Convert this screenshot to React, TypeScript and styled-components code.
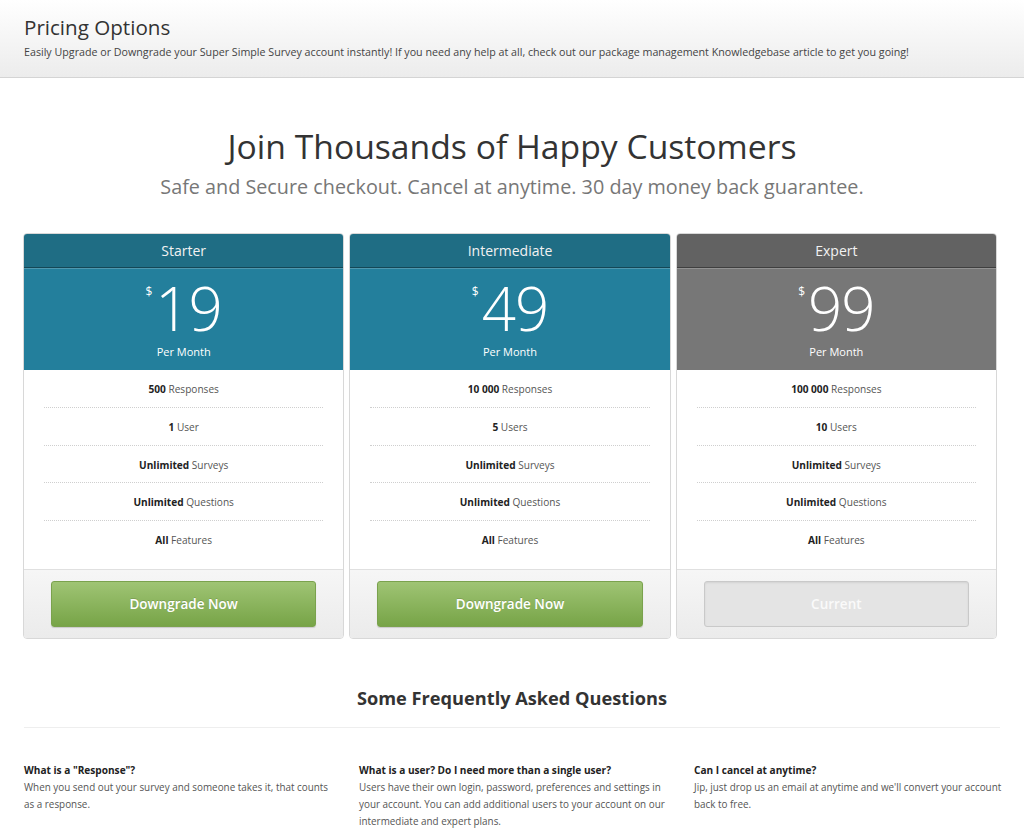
import styled, { createGlobalStyle, css } from "styled-components";

const GlobalStyle = createGlobalStyle`
  html, body {
    margin: 0;
    padding: 0;
    background: #fff;
    font-family: "Open Sans", "Liberation Sans", sans-serif;
    color: #333;
  }
  * { box-sizing: border-box; }
`;

const PageHeader = styled.header`
  height: 78px;
  padding: 13px 24px 0;
  background: linear-gradient(to bottom, #ffffff 0%, #ececec 100%);
  border-bottom: 1px solid #d4d4d4;
`;

const PageTitle = styled.h1`
  margin: 0;
  font-size: 20.6px;
  font-weight: 400;
  line-height: 28px;
  color: #333;
`;

const PageLead = styled.p`
  margin: 3px 0 0;
  font-size: 10.7px;
  line-height: 16px;
  color: #444;
`;

const Main = styled.main`
  padding: 0 25px;
`;

const Hero = styled.section`
  text-align: center;
  padding-top: 44px;
`;

const HeroTitle = styled.h2`
  margin: 0;
  font-size: 33.7px;
  font-weight: 400;
  line-height: 48px;
  color: #333;
`;

const HeroLead = styled.p`
  margin: 0;
  font-size: 19.8px;
  line-height: 34px;
  color: #777;
`;

const Plans = styled.div`
  display: grid;
  grid-template-columns: repeat(3, 1fr);
  gap: 5px;
  margin: 29px 2px 0 -2px;
`;

type Tone = "teal" | "grey";

const Card = styled.div`
  border: 1px solid #d8d8d8;
  border-radius: 4px;
  overflow: hidden;
  background: #fff;
`;

const CardHead = styled.div<{ $tone: Tone }>`
  height: 34px;
  line-height: 33px;
  text-align: center;
  font-size: 14px;
  color: #f2f2f2;
  border-bottom: 1px solid rgba(0, 0, 0, 0.35);
  background: ${(p) => (p.$tone === "teal" ? "#1f6d84" : "#626262")};
`;

const PriceBox = styled.div<{ $tone: Tone }>`
  height: 102px;
  text-align: center;
  color: #fff;
  padding-top: 10px;
  background: ${(p) => (p.$tone === "teal" ? "#237f9c" : "#777777")};
  box-shadow: inset 0 1px 0 rgba(255, 255, 255, 0.2);
`;

const Price = styled.div`
  display: inline-flex;
  align-items: flex-start;
  line-height: 1;
`;

const Dollar = styled.span`
  font-size: 12px;
  margin-top: 8px;
  margin-right: 3px;
`;

const Amount = styled.span`
  font-size: 60px;
  font-weight: 300;
  letter-spacing: -1px;
`;

const Period = styled.div`
  font-size: 11px;
  margin-top: 6px;
`;

const Features = styled.ul`
  list-style: none;
  margin: 0;
  padding: 0 20px 10px;
`;

const Feature = styled.li`
  height: 37.75px;
  line-height: 38px;
  text-align: center;
  font-size: 10.1px;
  color: #555;
  &:not(:last-child) {
    border-bottom: 1px dotted #cfcfcf;
  }
  b {
    color: #222;
    font-weight: 700;
  }
`;

const CardFoot = styled.div`
  height: 69px;
  padding: 11px 27px 0;
  border-top: 1px solid #e0e0e0;
  background: linear-gradient(to bottom, #f6f6f6 0%, #ebebeb 100%);
`;

const ActionButton = styled.button<{ $current?: boolean }>`
  display: block;
  width: 100%;
  height: 46px;
  border-radius: 3px;
  font-family: inherit;
  font-size: 13.5px;
  font-weight: 600;
  color: #fff;
  cursor: pointer;
  ${(p) =>
    p.$current
      ? css`
          background: #e4e4e4;
          border: 1px solid #c9c9c9;
          box-shadow: inset 0 1px 2px rgba(0, 0, 0, 0.08);
          color: #fafafa;
        `
      : css`
          background: linear-gradient(to bottom, #9fc474 0%, #77a447 100%);
          border: 1px solid #7aa24d;
          box-shadow: 0 1px 1px rgba(0, 0, 0, 0.15);
          text-shadow: 0 -1px 0 rgba(0, 0, 0, 0.15);
        `}
`;

const Faq = styled.section`
  margin: 46px -1px 0 -1px;
`;

const FaqTitle = styled.h3`
  margin: 0;
  text-align: center;
  font-size: 18.2px;
  font-weight: 700;
  line-height: 26px;
  color: #333;
  padding-bottom: 16px;
  border-bottom: 1px solid #eeeeee;
`;

const FaqGrid = styled.div`
  display: grid;
  grid-template-columns: repeat(3, 310px);
  column-gap: 25px;
  padding-top: 34px;
`;

const Question = styled.h4`
  margin: 0;
  font-size: 10.1px;
  font-weight: 700;
  line-height: 17px;
  color: #222;
`;

const Answer = styled.p`
  margin: 0;
  font-size: 9.9px;
  line-height: 17px;
  color: #555;
`;

type Plan = {
  name: string;
  price: string;
  tone: Tone;
  features: [string, string][];
  action: string;
  current?: boolean;
};

const plans: Plan[] = [
  {
    name: "Starter",
    price: "19",
    tone: "teal",
    features: [
      ["500", "Responses"],
      ["1", "User"],
      ["Unlimited", "Surveys"],
      ["Unlimited", "Questions"],
      ["All", "Features"],
    ],
    action: "Downgrade Now",
  },
  {
    name: "Intermediate",
    price: "49",
    tone: "teal",
    features: [
      ["10 000", "Responses"],
      ["5", "Users"],
      ["Unlimited", "Surveys"],
      ["Unlimited", "Questions"],
      ["All", "Features"],
    ],
    action: "Downgrade Now",
  },
  {
    name: "Expert",
    price: "99",
    tone: "grey",
    features: [
      ["100 000", "Responses"],
      ["10", "Users"],
      ["Unlimited", "Surveys"],
      ["Unlimited", "Questions"],
      ["All", "Features"],
    ],
    action: "Current",
    current: true,
  },
];

const faqs = [
  {
    q: 'What is a "Response"?',
    a: "When you send out your survey and someone takes it, that counts as a response.",
  },
  {
    q: "What is a user? Do I need more than a single user?",
    a: "Users have their own login, password, preferences and settings in your account. You can add additional users to your account on our intermediate and expert plans.",
  },
  {
    q: "Can I cancel at anytime?",
    a: "Jip, just drop us an email at anytime and we'll convert your account back to free.",
  },
];

export default function App() {
  return (
    <>
      <GlobalStyle />
      <PageHeader>
        <PageTitle>Pricing Options</PageTitle>
        <PageLead>
          Easily Upgrade or Downgrade your Super Simple Survey account instantly! If you need any help
          at all, check out our package management Knowledgebase article to get you going!
        </PageLead>
      </PageHeader>
      <Main>
        <Hero>
          <HeroTitle>Join Thousands of Happy Customers</HeroTitle>
          <HeroLead>Safe and Secure checkout. Cancel at anytime. 30 day money back guarantee.</HeroLead>
        </Hero>
        <Plans>
          {plans.map((plan) => (
            <Card key={plan.name}>
              <CardHead $tone={plan.tone}>{plan.name}</CardHead>
              <PriceBox $tone={plan.tone}>
                <Price>
                  <Dollar>$</Dollar>
                  <Amount>{plan.price}</Amount>
                </Price>
                <Period>Per Month</Period>
              </PriceBox>
              <Features>
                {plan.features.map(([bold, rest]) => (
                  <Feature key={rest}>
                    <b>{bold}</b> {rest}
                  </Feature>
                ))}
              </Features>
              <CardFoot>
                <ActionButton $current={plan.current}>{plan.action}</ActionButton>
              </CardFoot>
            </Card>
          ))}
        </Plans>
        <Faq>
          <FaqTitle>Some Frequently Asked Questions</FaqTitle>
          <FaqGrid>
            {faqs.map((f) => (
              <div key={f.q}>
                <Question>{f.q}</Question>
                <Answer>{f.a}</Answer>
              </div>
            ))}
          </FaqGrid>
        </Faq>
      </Main>
    </>
  );
}
